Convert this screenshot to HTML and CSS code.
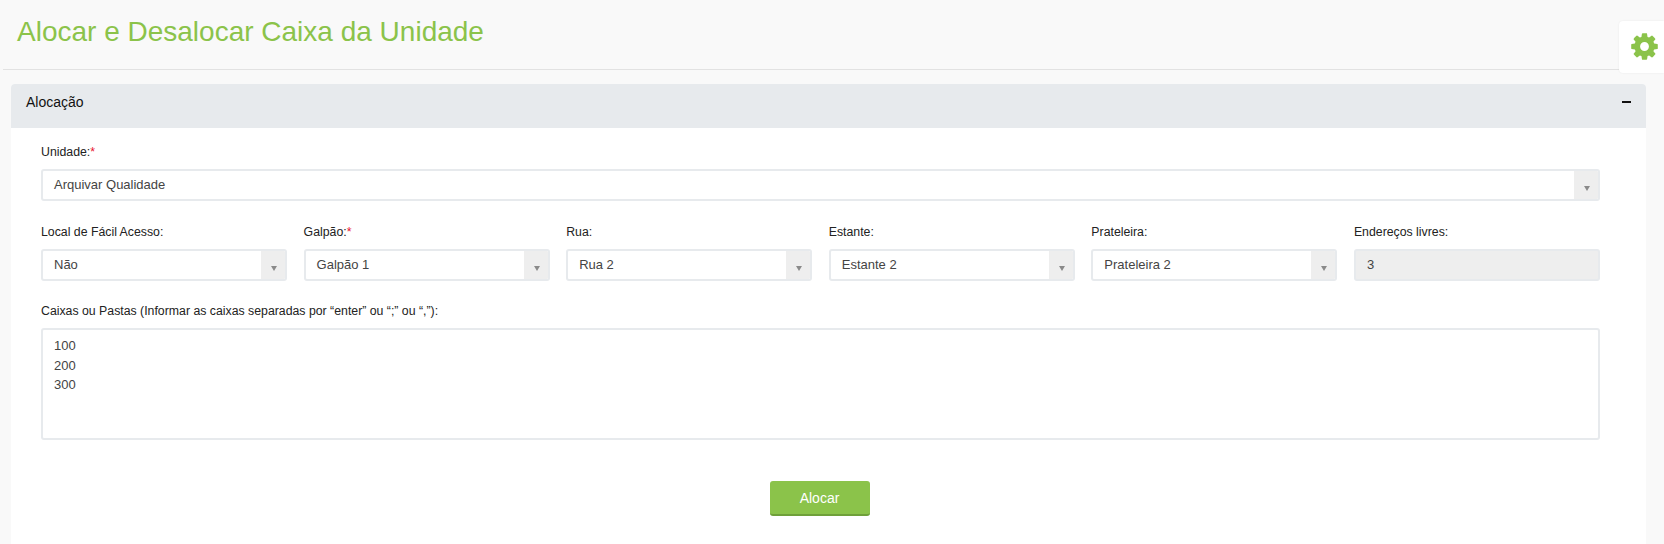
FILE: index.html
```html
<!DOCTYPE html>
<html lang="pt-BR">
<head>
<meta charset="utf-8">
<title>Alocar e Desalocar Caixa da Unidade</title>
<link rel="stylesheet" href="styles.css">
</head>
<body>
<header class="page-head"><h1>Alocar e Desalocar Caixa da Unidade</h1></header>
<button class="gear" type="button" aria-label="Configurações">
  <svg viewBox="0 0 1536 1792" width="27" height="31"><path fill="currentColor" d="M1024 896q0-106-75-181t-181-75-181 75-75 181 75 181 181 75 181-75 75-181zm512-109v222q0 12-8 23t-20 13l-185 28q-19 54-39 91 35 50 107 138 10 12 10 25t-9 23q-27 37-99 108t-94 71q-12 0-26-9l-138-108q-44 23-91 38-16 136-29 186-7 28-36 28h-222q-14 0-24.500-8.500t-11.500-21.500l-28-184q-49-16-90-37l-141 107q-10 9-25 9-14 0-25-11-126-114-165-168-7-10-7-23 0-12 8-23 15-21 51-66.500t54-70.500q-27-50-41-99l-183-27q-13-2-21-12.500t-8-23.500v-222q0-12 8-23t19-13l186-28q14-46 39-92-40-57-107-138-10-12-10-24 0-10 9-23 26-36 98.500-107.500t94.500-71.500q13 0 26 10l138 107q44-23 91-38 16-136 29-186 7-28 36-28h222q14 0 24.500 8.500t11.500 21.500l28 184q49 16 90 37l142-107q9-9 24-9 13 0 25 10 129 119 165 170 7 8 7 22 0 12-8 23-15 21-51 66.500t-54 70.500q26 50 41 98l183 28q13 2 21 12.500t8 23.500z"/></svg>
</button>
<section class="panel">
  <div class="panel-head"><span>Alocação</span><i class="minus"></i></div>
  <form class="panel-body">
    <div class="field">
      <label>Unidade:<b>*</b></label>
      <div class="select"><span>Arquivar Qualidade</span><i class="arrow"></i></div>
    </div>
    <div class="grid">
      <div class="field"><label>Local de Fácil Acesso:</label><div class="select"><span>Não</span><i class="arrow"></i></div></div>
      <div class="field"><label>Galpão:<b>*</b></label><div class="select"><span>Galpão 1</span><i class="arrow"></i></div></div>
      <div class="field"><label>Rua:</label><div class="select"><span>Rua 2</span><i class="arrow"></i></div></div>
      <div class="field"><label>Estante:</label><div class="select"><span>Estante 2</span><i class="arrow"></i></div></div>
      <div class="field"><label>Prateleira:</label><div class="select"><span>Prateleira 2</span><i class="arrow"></i></div></div>
      <div class="field"><label>Endereços livres:</label><div class="select readonly"><span>3</span></div></div>
    </div>
    <div class="field">
      <label>Caixas ou Pastas (Informar as caixas separadas por “enter” ou “;” ou “,”):</label>
      <div class="textarea">100<br>200<br>300</div>
    </div>
    <div class="actions"><button class="primary" type="button">Alocar</button></div>
  </form>
</section>
</body>
</html>
```
FILE: styles.css
```css
* { box-sizing: border-box; }
html, body { height: 100%; }
body {
  margin: 0;
  height: 544px;
  overflow: hidden;
  background: #f9f9f9;
  font-family: "Liberation Sans", Arial, sans-serif;
  color: #222;
  display: flex;
  flex-direction: column;
}
.page-head {
  height: 70px;
  margin-left: 3px;
  padding: 15px 0 0 14px;
  border-bottom: 1px solid #e2e2e2;
  flex: none;
}
.page-head h1 {
  margin: 0;
  font-size: 28px;
  line-height: 34px;
  font-weight: 400;
  color: #8bc34a;
}
.gear {
  position: absolute;
  top: 21px;
  right: 0;
  width: 45px;
  height: 52px;
  padding: 0 0 2px 12px;
  border: 0;
  border-radius: 4px 0 0 4px;
  background: #fff;
  color: #8bc34a;
  box-shadow: 0 0 2px rgba(0,0,0,.08);
  display: flex;
  align-items: center;
}
.panel {
  margin: 14px 18px 0 11px;
  flex: 1;
  background: #fff;
  border-radius: 4px 4px 0 0;
}
.panel-head {
  height: 44px;
  padding: 0 15px 8px 15px;
  background: #e7eaed;
  border-radius: 4px 4px 0 0;
  display: flex;
  align-items: center;
  justify-content: space-between;
  font-size: 14px;
  color: #111;
}
.minus {
  width: 9px;
  height: 2px;
  background: #111;
}
.panel-body {
  padding: 16px 46px 0 30px;
  display: flex;
  flex-direction: column;
}
.field { display: flex; flex-direction: column; min-width: 0; }
.field label {
  font-size: 12.3px;
  line-height: 16px;
  height: 25px;
  color: #222;
}
.field label b { font-weight: 400; color: #e8132f; }
.grid {
  margin-top: 23px;
  display: grid;
  grid-template-columns: repeat(6, 1fr);
  column-gap: 16.5px;
}
.select {
  height: 32px;
  border: 2px solid #e7eaed;
  border-radius: 3px;
  background: #fff;
  padding-left: 11px;
  display: flex;
  align-items: center;
  justify-content: space-between;
  font-size: 13px;
  color: #444;
  overflow: hidden;
}
.select span { padding-bottom: 2px; }
.select.readonly { background: #eee; }
.arrow {
  width: 25px;
  height: 28px;
  background: #eee;
  position: relative;
  flex: none;
  margin-right: -1px;
}
.arrow::after {
  content: "";
  position: absolute;
  left: 10px;
  top: 15px;
  border-left: 3px solid transparent;
  border-right: 3px solid transparent;
  border-top: 5px solid #8a8a8a;
}
.grid + .field { margin-top: 22px; }
.textarea {
  height: 112px;
  border: 2px solid #e7eaed;
  border-radius: 3px;
  background: #fff;
  padding: 6px 11px;
  font-size: 13px;
  line-height: 19.5px;
  color: #444;
}
.actions {
  margin-top: 41px;
  padding-right: 2px;
  display: flex;
  justify-content: center;
}
.primary {
  width: 100px;
  height: 35px;
  border: 0;
  border-bottom: 2px solid #6fa03a;
  border-radius: 3px;
  background: #8bc34a;
  color: #fff;
  font: 14px "Liberation Sans", Arial, sans-serif;
}
```
